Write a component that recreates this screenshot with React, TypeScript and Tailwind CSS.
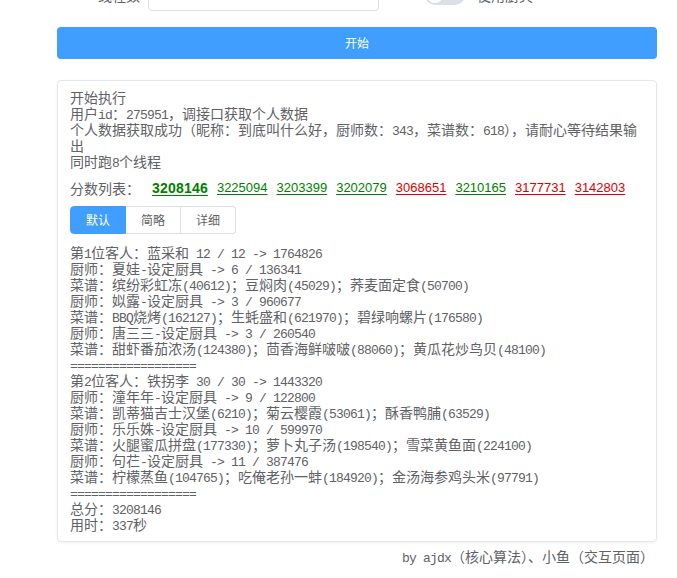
import React from "react";

const cjk = "font-['Noto_Sans_CJK_SC',sans-serif]";

// ASCII runs get a narrow mono face so they sit at half the CJK width
function Txt({ s }: { s: string }) {
  const parts = s.split(/([\x20-\x7e]+)/);
  return (
    <>
      {parts.map((p, i) =>
        /^[\x20-\x7e]+$/.test(p) ? (
          <span
            key={i}
            className="font-['Liberation_Mono',monospace] text-[13px] leading-[10px] tracking-[-0.8px]"
          >
            {p}
          </span>
        ) : (
          <React.Fragment key={i}>{p}</React.Fragment>
        )
      )}
    </>
  );
}

const intro = [
  "开始执行",
  "用户id：275951，调接口获取个人数据",
  "个人数据获取成功（昵称：到底叫什么好，厨师数：343，菜谱数：618），请耐心等待结果输出",
  "同时跑8个线程",
];

const scores: { v: string; good: boolean; best?: boolean }[] = [
  { v: "3208146", good: true, best: true },
  { v: "3225094", good: true },
  { v: "3203399", good: true },
  { v: "3202079", good: true },
  { v: "3068651", good: false },
  { v: "3210165", good: true },
  { v: "3177731", good: false },
  { v: "3142803", good: false },
];

const log = [
  "第1位客人：蓝采和 12 / 12 -> 1764826",
  "厨师：夏娃-设定厨具 -> 6 / 136341",
  "菜谱：缤纷彩虹冻(40612)；豆焖肉(45029)；荞麦面定食(50700)",
  "厨师：姒露-设定厨具 -> 3 / 960677",
  "菜谱：BBQ烧烤(162127)；生蚝盛和(621970)；碧绿响螺片(176580)",
  "厨师：唐三三-设定厨具 -> 3 / 260540",
  "菜谱：甜虾番茄浓汤(124380)；茴香海鲜啵啵(88060)；黄瓜花炒鸟贝(48100)",
  "==================",
  "第2位客人：铁拐李 30 / 30 -> 1443320",
  "厨师：潼年年-设定厨具 -> 9 / 122800",
  "菜谱：凯蒂猫吉士汉堡(6210)；菊云樱霞(53061)；酥香鸭脯(63529)",
  "厨师：乐乐姝-设定厨具 -> 10 / 599970",
  "菜谱：火腿蜜瓜拼盘(177330)；萝卜丸子汤(198540)；雪菜黄鱼面(224100)",
  "厨师：句芢-设定厨具 -> 11 / 387476",
  "菜谱：柠檬蒸鱼(104765)；吃俺老孙一蚌(184920)；金汤海参鸡头米(97791)",
  "==================",
  "总分：3208146",
  "用时：337秒",
];

const tabs = ["默认", "简略", "详细"];

export default function App() {
  return (
    <div className={`${cjk} min-h-[578px] bg-white text-[#606266] overflow-hidden`}>
      <div className="w-[600px] ml-[57px]">
        {/* settings row, mostly scrolled out of view */}
        <div className="-mt-[21px] flex items-center h-8">
          <label className="w-[91px] pr-2 text-right text-[14px] text-[#606266]">线程数</label>
          <div className="w-[231px] h-8 border border-[#dcdfe6] rounded flex items-center px-[15px] text-[14px] text-[#606266]">
            <Txt s="8" />
          </div>
          <div className="ml-[46px] flex items-center">
            <span className="relative w-[40px] h-5 rounded-full bg-[#dcdfe6]">
              <span className="absolute left-[2px] top-[2px] w-4 h-4 rounded-full bg-white" />
            </span>
            <span className="ml-[12px] text-[14px] text-[#606266]">使用厨具</span>
          </div>
        </div>

        <button className="mt-4 w-full h-8 rounded bg-[#409eff] text-white text-[12px] flex items-center justify-center">
          开始
        </button>

        <div className="mt-[21px] border border-[#e4e7ed] rounded shadow-[0_1px_3px_rgba(0,0,0,0.06)] pl-3 pr-2 pt-2 pb-[9px] text-[14px] leading-4 whitespace-pre-wrap">
          {intro.map((l) => (
            <div key={l}>
              <Txt s={l} />
            </div>
          ))}

          <div className="mt-[9px] h-5 flex items-center leading-5">
            <span className="w-[82px]">分数列表：</span>
            <div className="flex items-center gap-[9px] font-['Liberation_Sans',sans-serif]">
              {scores.map((s) => (
                <a
                  key={s.v}
                  className={`underline underline-offset-2 ${s.good ? "text-[#008000]" : "text-[#e00000]"} ${
                    s.best ? "font-bold text-[14px] tracking-[0.2px]" : "text-[13px]"
                  }`}
                >
                  {s.v}
                </a>
              ))}
            </div>
          </div>

          <div className="mt-2 flex text-[12px]">
            {tabs.map((t, i) => (
              <span
                key={t}
                className={`h-7 px-[15px] flex items-center border ${
                  i === 0
                    ? "bg-[#409eff] border-[#409eff] text-white rounded-l"
                    : "bg-white border-[#dcdfe6] border-l-0 text-[#606266]"
                } ${i === tabs.length - 1 ? "rounded-r" : ""}`}
              >
                {t}
              </span>
            ))}
          </div>

          <div className="mt-[10px]">
            {log.map((l, i) => (
              <div key={i}>
                <Txt s={l} />
              </div>
            ))}
          </div>
        </div>

        <div className="mt-[6px] pr-[3px] text-right text-[14px] leading-4">
          <Txt s="by ajdx（核心算法）、小鱼（交互页面）" />
        </div>
      </div>
    </div>
  );
}
